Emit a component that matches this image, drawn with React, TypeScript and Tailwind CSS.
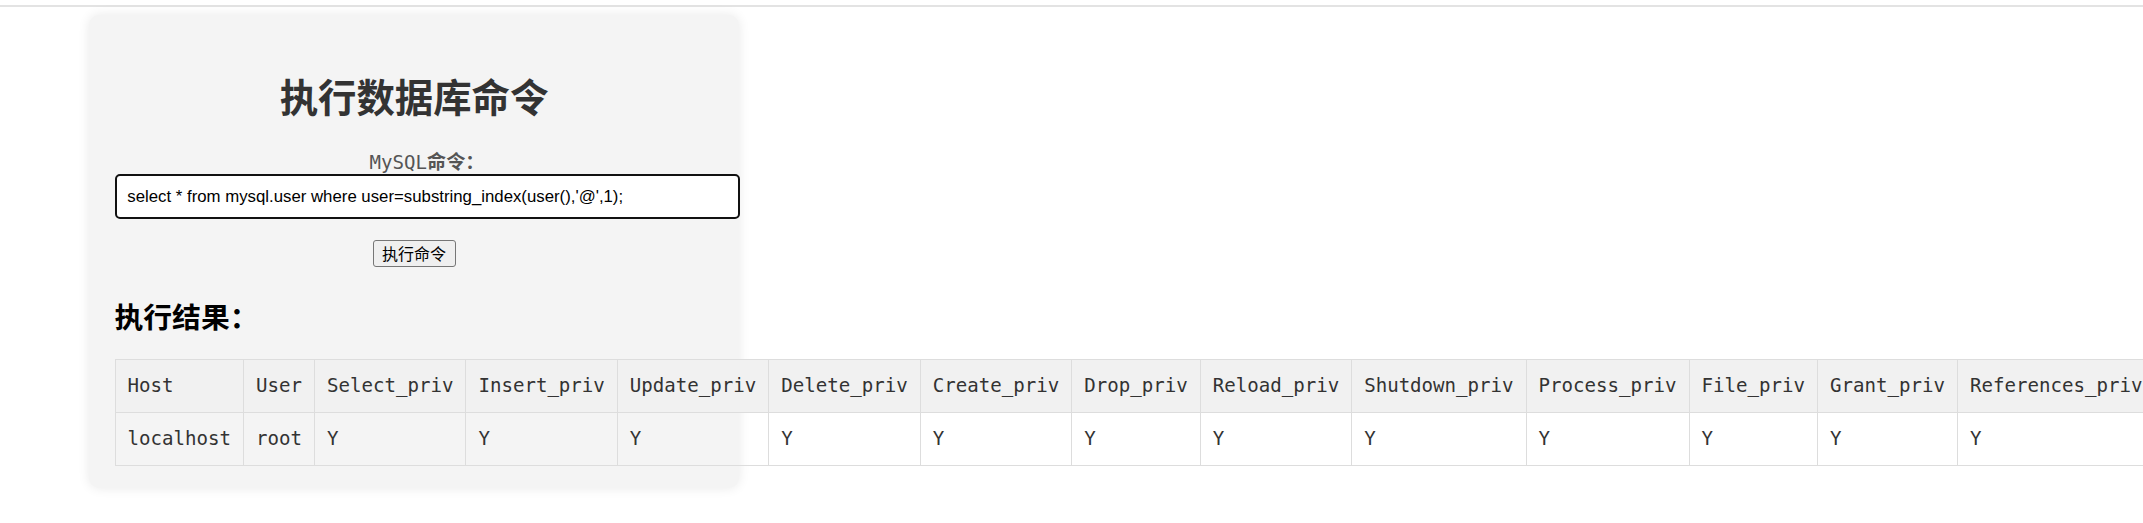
import React from "react";

const cols: [string, string][] = [
  ["Host", "localhost"],
  ["User", "root"],
  ["Select_priv", "Y"],
  ["Insert_priv", "Y"],
  ["Update_priv", "Y"],
  ["Delete_priv", "Y"],
  ["Create_priv", "Y"],
  ["Drop_priv", "Y"],
  ["Reload_priv", "Y"],
  ["Shutdown_priv", "Y"],
  ["Process_priv", "Y"],
  ["File_priv", "Y"],
  ["Grant_priv", "Y"],
  ["References_priv", "Y"],
  ["Index_priv", "Y"],
  ["Alter_priv", "Y"],
  ["Show_db_priv", "Y"],
  ["Super_priv", "Y"],
];

export default function App() {
  return (
    <div className="w-[2143px] h-[523px] overflow-hidden bg-white font-['DejaVu_Sans_Mono','Noto_Sans_CJK_SC',monospace]">
      <div className="h-[5px]" />
      <div className="h-[2px] bg-[#e3e3e3]" />
      <div className="ml-[89px] mt-[8px] w-[650px] bg-[#f4f4f4] rounded-[10px] shadow-[0_0_12px_rgba(0,0,0,0.09)] px-[25.5px] pt-[24px] pb-[22px]">
        <h1 className="mt-[37px] text-center text-[38.4px] leading-[46px] font-bold text-[#333]">
          执行数据库命令
        </h1>
        <div className="mt-[29px] w-[625px] text-center text-[19.1px] leading-[23px] text-[#555]">
          MySQL<span className="font-bold">命令：</span>
        </div>
        <input
          readOnly
          value="select * from mysql.user where user=substring_index(user(),'@',1);"
          className="block w-[625px] h-[45px] border-2 border-[#111] rounded-[5px] bg-white px-[10.8px] text-[16.8px] text-black font-['Liberation_Sans',Arial,sans-serif] outline-none"
        />
        <div className="mt-[21px] flex justify-center">
          <button className="w-[83px] h-[27px] border border-[#767676] rounded-[3px] bg-[#efefef] text-[16px] leading-[23px] text-black font-['Noto_Sans_CJK_SC',sans-serif]">
            执行命令
          </button>
        </div>
        <h2 className="mt-[32.6px] text-[28.8px] leading-[36px] font-bold text-black">
          执行结果：
        </h2>
        <table className="mt-[23.7px] border-collapse text-[19.1px] leading-[28px] text-[#333]">
          <thead>
            <tr>
              {cols.map(([h]) => (
                <th
                  key={h}
                  className="border border-[#dddddd] bg-[#f1f1f1] p-3 text-left font-normal whitespace-nowrap"
                >
                  {h}
                </th>
              ))}
            </tr>
          </thead>
          <tbody>
            <tr>
              {cols.map(([h, v]) => (
                <td
                  key={h}
                  className="border border-[#dddddd] p-3 text-left whitespace-nowrap"
                >
                  {v}
                </td>
              ))}
            </tr>
          </tbody>
        </table>
      </div>
    </div>
  );
}
